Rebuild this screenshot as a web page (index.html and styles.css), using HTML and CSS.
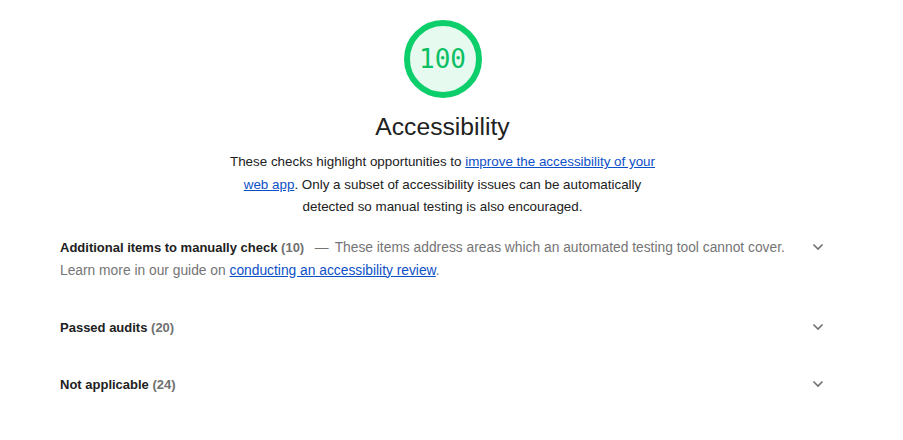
FILE: index.html
```html
<!DOCTYPE html>
<html>
<head>
<meta charset="utf-8">
<link rel="stylesheet" href="styles.css">
</head>
<body>
<div class="category">
  <header class="cat-header">
    <div class="gauge">
      <svg class="gauge-svg" width="80" height="80" viewBox="0 0 80 80">
        <circle cx="40" cy="40" r="36" fill="#e6faef" stroke="#0cce6b" stroke-width="6"/>
      </svg>
      <span class="gauge-score">100</span>
    </div>
    <h2 class="cat-title">Accessibility</h2>
    <p class="cat-desc">These checks highlight opportunities to <a href="#">improve the accessibility of your web app</a>. Only a subset of accessibility issues can be automatically detected so manual testing is also encouraged.</p>
  </header>
  <div class="groups">
    <div class="group group-manual">
      <div class="group-text">
        <span class="group-title">Additional items to manually check</span> <span class="group-count">(10)</span>
        <span class="group-desc"><span class="dash">—</span>These items address areas which an automated testing tool cannot cover. Learn more in our guide on <a href="#">conducting an accessibility review</a>.</span>
      </div>
      <span class="chevron"><svg width="12" height="8" viewBox="0 0 12 8"><path d="M1.5 1.5 L6 6 L10.5 1.5" fill="none" stroke="#707070" stroke-width="1.6"/></svg></span>
    </div>
    <div class="group">
      <div class="group-text">
        <span class="group-title">Passed audits</span> <span class="group-count">(20)</span>
      </div>
      <span class="chevron"><svg width="12" height="8" viewBox="0 0 12 8"><path d="M1.5 1.5 L6 6 L10.5 1.5" fill="none" stroke="#707070" stroke-width="1.6"/></svg></span>
    </div>
    <div class="group">
      <div class="group-text">
        <span class="group-title">Not applicable</span> <span class="group-count">(24)</span>
      </div>
      <span class="chevron"><svg width="12" height="8" viewBox="0 0 12 8"><path d="M1.5 1.5 L6 6 L10.5 1.5" fill="none" stroke="#707070" stroke-width="1.6"/></svg></span>
    </div>
  </div>
</div>
</body>
</html>
```
FILE: styles.css
```css
html, body {
  margin: 0;
  padding: 0;
  background: #ffffff;
}
body {
  font-family: "Liberation Sans", Arial, sans-serif;
  color: #212121;
  width: 903px;
  height: 440px;
  overflow: hidden;
}
.category {
  padding: 19px 73px 0 60px;
}
.cat-header {
  display: flex;
  flex-direction: column;
  align-items: center;
  margin-right: 5px;
}
.gauge {
  position: relative;
  width: 80px;
  height: 80px;
}
.gauge-svg {
  display: block;
}
.gauge-score {
  position: absolute;
  inset: 0;
  display: flex;
  align-items: center;
  justify-content: center;
  font-family: "DejaVu Sans Mono", monospace;
  font-size: 26px;
  color: #0cbf63;
}
.cat-title {
  margin: 12px 0 0 0;
  font-size: 24.7px;
  font-weight: normal;
  line-height: 32px;
  color: #212121;
}
.cat-desc {
  margin: 8px 0 0 0;
  width: 440px;
  text-align: center;
  font-size: 13.4px;
  line-height: 22.5px;
}
a {
  color: #0c50c7;
  text-decoration: underline;
}
.groups {
  margin-top: 17px;
}
.group {
  display: flex;
  align-items: flex-start;
  justify-content: space-between;
  font-size: 13px;
  line-height: 23px;
}
.group + .group {
  margin-top: 34px;
}
.group-text {
  flex: 1;
}
.group-title {
  font-weight: bold;
  color: #212121;
}
.group-count {
  color: #707070;
  font-weight: bold;
}
.group-desc {
  color: #757575;
  font-size: 13.8px;
}
.dash {
  margin: 0 6px 0 7px;
}
.chevron {
  width: 24px;
  height: 23px;
  display: flex;
  align-items: center;
  justify-content: center;
  margin-left: 20px;
}
.chevron svg {
  display: block;
}
```
